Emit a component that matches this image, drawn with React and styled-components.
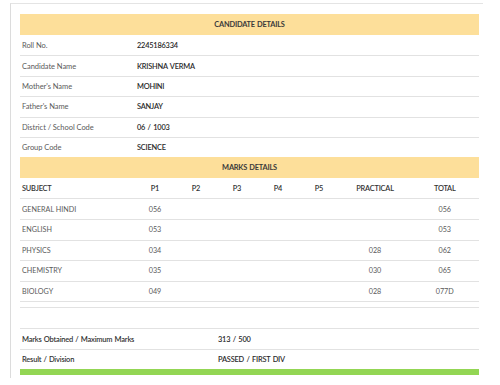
import React from "react";
import styled, { createGlobalStyle } from "styled-components";

const Global = createGlobalStyle`
  html, body { margin: 0; padding: 0; background: #fff; }
  body { font-family: Lato, "Open Sans", sans-serif; }
`;

const Frame = styled.div`
  margin: 3px 0 0 10px;
  width: 473px;
  height: 375px;
  box-sizing: border-box;
  border-top: 1px solid #e4e4e4;
  border-left: 1px solid #dcdcdc;
  padding: 10px 4px 0 9px;
`;

const Band = styled.div`
  background: #fddf9a;
  height: ${(p) => p.$h}px;
  display: flex;
  align-items: center;
  justify-content: center;
  font-size: 7.4px;
  font-weight: 700;
  color: #3a3a3a;
  letter-spacing: -0.2px;
  word-spacing: 0.6px;
`;

const Row = styled.div`
  display: grid;
  grid-template-columns: ${(p) => p.$cols};
  align-items: center;
  height: ${(p) => p.$h || 20.4}px;
  box-sizing: border-box;
  border-top: ${(p) => (p.$noLine ? "none" : "1px solid #e2e2e2")};
  font-size: 7.5px;
`;

const Label = styled.div`
  padding-left: 2px;
  color: ${(p) => (p.$dark ? "#333" : "#5a5a5a")};
  letter-spacing: ${(p) => (p.$dark ? "-0.2px" : "-0.05px")};
  word-spacing: ${(p) => (p.$dark ? "0.5px" : "0")};
  font-weight: ${(p) => (p.$dark ? 600 : 400)};
`;

const Value = styled.div`
  padding-left: 2px;
  color: #2a2a2a;
  font-weight: 600;
  font-size: 7.4px;
  letter-spacing: -0.2px;
  word-spacing: 0.8px;
`;

const Head = styled.div`
  color: #333;
  font-weight: 600;
  font-size: 7.4px;
  letter-spacing: -0.2px;
  text-align: ${(p) => (p.$left ? "left" : "center")};
  padding-left: ${(p) => (p.$left ? "2px" : "0")};
`;

const Cell = styled.div`
  color: #5a5a5a;
  font-size: 7.2px;
  text-align: ${(p) => (p.$left ? "left" : "center")};
  padding-left: ${(p) => (p.$left ? "2px" : "0")};
`;

const GreenBar = styled.div`
  height: 6px;
  background: #93d654;
`;

const infoCols = "115px 1fr";
const markCols = "114.5px 41px 41px 41px 41px 41px 71px 1fr";
const sumCols = "196px 1fr";

const info = [
  ["Roll No.", "2245186334"],
  ["Candidate Name", "KRISHNA VERMA"],
  ["Mother's Name", "MOHINI"],
  ["Father's Name", "SANJAY"],
  ["District / School Code", "06 / 1003"],
  ["Group Code", "SCIENCE"],
];

const heads = ["P1", "P2", "P3", "P4", "P5", "PRACTICAL", "TOTAL"];

const marks = [
  ["GENERAL HINDI", "056", "", "", "", "", "", "056"],
  ["ENGLISH", "053", "", "", "", "", "", "053"],
  ["PHYSICS", "034", "", "", "", "", "028", "062"],
  ["CHEMISTRY", "035", "", "", "", "", "030", "065"],
  ["BIOLOGY", "049", "", "", "", "", "028", "077D"],
];

export default function App() {
  return (
    <>
      <Global />
      <Frame>
        <Band $h={21}>CANDIDATE DETAILS</Band>
        {info.map(([l, v], i) => (
          <Row key={l} $cols={infoCols} $noLine={i === 0} $h={20.4}>
            <Label>{l}</Label>
            <Value>{v}</Value>
          </Row>
        ))}
        <Band $h={21}>MARKS DETAILS</Band>
        <Row $cols={markCols} $noLine $h={20}>
          <Head $left>SUBJECT</Head>
          {heads.map((h) => (
            <Head key={h}>{h}</Head>
          ))}
        </Row>
        {marks.map((r) => (
          <Row key={r[0]} $cols={markCols} $h={20.6}>
            {r.map((c, j) => (
              <Cell key={j} $left={j === 0}>
                {c}
              </Cell>
            ))}
          </Row>
        ))}
        <Row $cols={sumCols} $h={6} />
        <Row $cols={sumCols} $h={21} />
        <Row $cols={sumCols} $h={20.5}>
          <Label $dark>Marks Obtained / Maximum Marks</Label>
          <Value>313 / 500</Value>
        </Row>
        <Row $cols={sumCols} $h={20.5}>
          <Label $dark>Result / Division</Label>
          <Value>PASSED / FIRST DIV</Value>
        </Row>
        <GreenBar />
      </Frame>
    </>
  );
}
